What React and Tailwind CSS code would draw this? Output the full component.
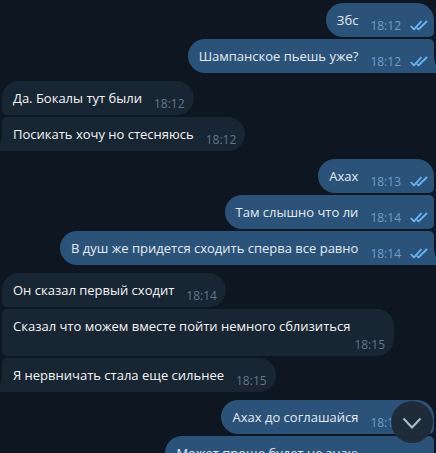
import React from "react";

const groups = [
  {
    out: true,
    items: [
      { text: "Збс", time: "18:12" },
      { text: "Шампанское пьешь уже?", time: "18:12" },
    ],
  },
  {
    out: false,
    items: [
      { text: "Да. Бокалы тут были", time: "18:12" },
      { text: "Посикать хочу но стесняюсь", time: "18:12" },
    ],
  },
  {
    out: true,
    items: [
      { text: "Ахах", time: "18:13" },
      { text: "Там слышно что ли", time: "18:14" },
      { text: "В душ же придется сходить сперва все равно", time: "18:14" },
    ],
  },
  {
    out: false,
    items: [
      { text: "Он сказал первый сходит", time: "18:14" },
      { text: "Сказал что можем вместе пойти немного сблизиться", time: "18:15" },
      { text: "Я нервничать стала еще сильнее", time: "18:15" },
    ],
  },
  {
    out: true,
    items: [
      { text: "Ахах до соглашайся", time: "18:15" },
      { text: "Может проще будет не знаю", time: "18:15" },
    ],
  },
];

function ReadMark() {
  return (
    <svg
      width="18"
      height="11"
      viewBox="0 0 18 11"
      className="mb-[3px] ml-[9px] shrink-0"
      fill="none"
      stroke="#6ab5f5"
      strokeWidth="1.8"
      strokeLinejoin="round"
      role="img"
      aria-label="Прочитано"
    >
      <path d="M0.8 6 L4 9.4 L11.6 1" />
      <path d="M6.8 8 L8.6 9.4 L17 1" />
    </svg>
  );
}

function Tail({ out }) {
  return (
    <svg
      width="7"
      height="17"
      viewBox="0 0 7 17"
      aria-hidden="true"
      className={
        out
          ? "absolute bottom-0 left-full fill-[#2b5278]"
          : "absolute right-full bottom-0 -scale-x-100 fill-[#182533]"
      }
    >
      <path d="M0 0 C0.3 6 1.5 11 6.5 15.2 C7.2 16 6.8 17 6 17 H0 Z" />
    </svg>
  );
}

function Message({ text, time, out, first, last }) {
  const shape = out
    ? `rounded-l-[17px] bg-[#2b5278] pr-[6px] pl-[11px] ${first ? "rounded-tr-[17px]" : "rounded-tr-[5px]"} ${last ? "" : "rounded-br-[5px]"}`
    : `rounded-r-[17px] bg-[#182533] pr-[9px] pl-[11px] ${first ? "rounded-tl-[17px]" : "rounded-tl-[5px]"} ${last ? "" : "rounded-bl-[5px]"}`;
  return (
    <li
      className={`relative flex min-h-[34px] max-w-[392px] flex-wrap justify-end gap-x-3 gap-y-[2px] pt-2 pb-[3px] ${shape}`}
    >
      <p className={`grow text-[13px] leading-[18px] ${out ? "text-[#e4ecf2]" : "text-[#f5f5f5]"}`}>
        {text}
      </p>
      <div className="flex items-end self-end">
        <time
          className={`text-[12px] leading-[16px] ${out ? "text-[#6f9dcb]" : "text-[#647687]"}`}
        >
          {time}
        </time>
        {out && <ReadMark />}
      </div>
      {last && <Tail out={out} />}
    </li>
  );
}

export default function App() {
  return (
    <main className="relative h-screen overflow-hidden bg-[#0e1621] font-['Open_Sans','Noto_Sans',sans-serif]">
      <div className="flex flex-col gap-2 px-[2px] pt-[3px]">
        {groups.map((g, i) => (
          <ul
            key={i}
            className={`flex flex-col gap-[2px] ${g.out ? "items-end" : "items-start"}`}
          >
            {g.items.map((m, j) => (
              <Message
                key={j}
                {...m}
                out={g.out}
                first={j === 0}
                last={j === g.items.length - 1}
              />
            ))}
          </ul>
        ))}
      </div>
      <button
        type="button"
        aria-label="Вниз"
        className="absolute right-[3px] bottom-[10px] flex size-[42px] items-center justify-center rounded-full bg-[#1e2c3a] pt-[2px]"
      >
        <svg width="20" height="12" viewBox="0 0 20 12" fill="none" stroke="#b4bcc4" strokeWidth="2">
          <path d="M1.5 1.5 L10 10.5 L18.5 1.5" />
        </svg>
      </button>
    </main>
  );
}
